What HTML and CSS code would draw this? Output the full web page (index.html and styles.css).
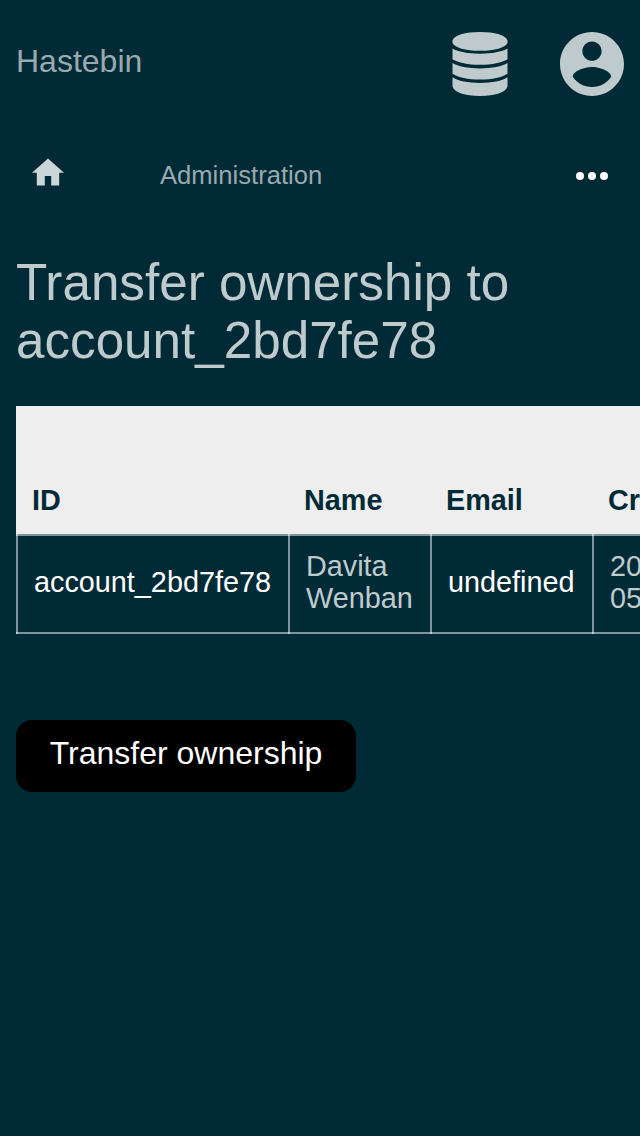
FILE: index.html
```html
<!DOCTYPE html>
<html lang="en">
<head>
<meta charset="utf-8">
<title>Hastebin</title>
<link rel="stylesheet" href="styles.css">
</head>
<body>
<header class="topbar">
  <a class="brand">Hastebin</a>
  <div class="actions">
    <svg class="db" viewBox="0 0 56 64"><path d="M.5 8.500C2 3.200 13 0 28 0S54 3.200 55.500 8.500V11C53 15.700 43 18.800 28 18.800S3 15.700 .5 11zM.5 16.600C6 20 16 21.700 28 21.700s22-1.700 27.500-5.100V27.300C50 30.800 40 32.800 28 32.800S6 30.800 .5 27.300zM.5 31C6 34.500 16 36.400 28 36.400s22-1.900 27.500-5.400V41.700C50 45.300 40 47.500 28 47.500S6 45.300 .5 41.700zM.5 45.200C6 48.900 16 50.900 28 50.900s22-2 27.500-5.700V54.500C54 60.300 43 64 28 64S2 60.300 .5 54.500z"/></svg>
    <svg class="user" viewBox="2 2 20 20"><path d="M12 2C6.480 2 2 6.480 2 12s4.480 10 10 10 10-4.480 10-10S17.520 2 12 2zm0 3c1.660 0 3 1.340 3 3s-1.340 3-3 3-3-1.340-3-3 1.340-3 3-3zm0 14.200c-2.500 0-4.710-1.280-6-3.220.030-1.990 4-3.080 6-3.080 1.990 0 5.970 1.090 6 3.080-1.290 1.940-3.500 3.220-6 3.220z"/></svg>
  </div>
</header>
<nav class="crumbs">
  <svg class="home" viewBox="2 2.750 20 20"><path d="M10 20v-6h4v6h5v-8h3L12 3 2 12h3v8z"/></svg>
  <a class="section">Administration</a>
  <svg class="more" viewBox="0 0 32 8"><circle cx="4" cy="4" r="4"/><circle cx="16" cy="4" r="4"/><circle cx="28" cy="4" r="4"/></svg>
</nav>
<main class="content">
  <h1 class="title">Transfer ownership to account_2bd7fe78</h1>
  <div class="table-wrap">
    <div class="table">
      <div class="row head">
        <div class="th">ID</div><div class="th">Name</div><div class="th">Email</div><div class="th">Created</div>
      </div>
      <div class="row body">
        <div class="td strong">account_2bd7fe78</div><div class="td">Davita<br>Wenban</div><div class="td strong">undefined</div><div class="td">2023-<br>05-14</div>
      </div>
    </div>
  </div>
  <button class="submit">Transfer ownership</button>
</main>
</body>
</html>
```

FILE: styles.css
```css
* { box-sizing: border-box; }
body {
  margin: 0;
  height: 1136px;
  overflow: hidden;
  background: #002b36;
  color: #bfcacd;
  font-family: "Liberation Sans", Arial, sans-serif;
  font-size: 32px;
}
svg { display: block; fill: currentColor; }
.topbar {
  display: flex;
  justify-content: space-between;
  height: 128px;
  padding: 32px 16px;
}
.brand { color: #99aaaf; line-height: 36px; padding-top: 11px; }
.actions { display: flex; gap: 52px; }
.db { width: 56px; height: 64px; }
.user { width: 64px; height: 64px; }
.crumbs {
  display: flex;
  height: 96px;
  padding: 0 32px;
}
.home { width: 32px; height: 32px; margin-top: 30px; color: #ccd5d7; }
.section { margin-left: 96px; padding-top: 33px; font-size: 25.600px; line-height: 29px; color: #99aaaf; }
.more { width: 32px; height: 8px; margin: 44px 0 0 auto; color: #fff; }
.content { padding: 30px 0 0 16px; }
.title { margin: 0 16px 36px 0; font-size: 51.200px; font-weight: 400; line-height: 58px; }
.table-wrap { overflow: hidden; }
.table { width: 800px; font-size: 28.800px; line-height: 32px; }
.row { display: grid; grid-template-columns: 272px 142px 162px 224px; }
.head { height: 128px; align-items: end; background: #eee; color: #002b36; font-weight: 700; }
.th { padding: 0 16px 18px; }
.body { height: 100px; box-shadow: inset 0 2px rgba(255,255,255,.5), inset 0 -2px rgba(255,255,255,.5); }
.td {
  display: flex;
  align-items: center;
  padding: 0 16px 4px;
  border-left: 2px solid rgba(255,255,255,.5);
}
.strong { color: #fff; }
.submit {
  display: block;
  width: 340px;
  height: 72px;
  margin-top: 86px;
  padding: 0 0 5px;
  border: 0;
  border-radius: 16px;
  background: #000;
  color: #fff;
  font: inherit;
}
```
